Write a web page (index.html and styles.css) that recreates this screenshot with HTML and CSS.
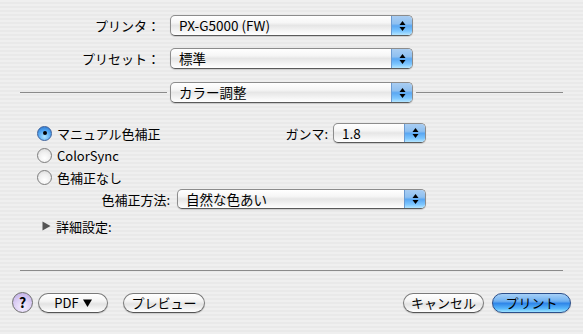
FILE: index.html
```html
<!DOCTYPE html>
<html lang="ja">
<head>
<meta charset="utf-8">
<link rel="stylesheet" href="styles.css">
</head>
<body>
<div class="dialog">
  <div class="field-row">
    <div class="flabel">プリンタ：</div>
    <div class="popup wide"><span class="val">PX-G5000 (FW)</span><span class="arr"><svg width="7" height="12" viewBox="0 0 7 12"><path d="M3.5 1 L6.5 5 L0.5 5 Z M0.5 7 L6.5 7 L3.5 11 Z" fill="#000"/></svg></span></div>
  </div>
  <div class="field-row second">
    <div class="flabel">プリセット：</div>
    <div class="popup wide"><span class="val">標準</span><span class="arr"><svg width="7" height="12" viewBox="0 0 7 12"><path d="M3.5 1 L6.5 5 L0.5 5 Z M0.5 7 L6.5 7 L3.5 11 Z" fill="#000"/></svg></span></div>
  </div>
  <div class="sep-row">
    <div class="line"></div>
    <div class="popup wide"><span class="val">カラー調整</span><span class="arr"><svg width="7" height="12" viewBox="0 0 7 12"><path d="M3.5 1 L6.5 5 L0.5 5 Z M0.5 7 L6.5 7 L3.5 11 Z" fill="#000"/></svg></span></div>
    <div class="line"></div>
  </div>

  <div class="opts">
    <div class="opt-row">
      <span class="radio on"><span class="dot"></span></span><span class="rtext">マニュアル色補正</span>
      <div class="gamma">
        <span class="glabel">ガンマ:</span>
        <div class="popup gpop"><span class="val">1.8</span><span class="arr"><svg width="7" height="12" viewBox="0 0 7 12"><path d="M3.5 1 L6.5 5 L0.5 5 Z M0.5 7 L6.5 7 L3.5 11 Z" fill="#000"/></svg></span></div>
      </div>
    </div>
    <div class="opt-row">
      <span class="radio"></span><span class="rtext">ColorSync</span>
    </div>
    <div class="opt-row">
      <span class="radio"></span><span class="rtext">色補正なし</span>
    </div>
    <div class="method-row">
      <span class="mlabel">色補正方法:</span>
      <div class="popup mpop"><span class="val">自然な色あい</span><span class="arr"><svg width="7" height="12" viewBox="0 0 7 12"><path d="M3.5 1 L6.5 5 L0.5 5 Z M0.5 7 L6.5 7 L3.5 11 Z" fill="#000"/></svg></span></div>
    </div>
    <div class="disclose-row">
      <svg class="tri" width="9" height="10" viewBox="0 0 9 10"><path d="M0.5 0.5 L8.5 5 L0.5 9.5 Z" fill="#555"/></svg>
      <span>詳細設定:</span>
    </div>
  </div>

  <div class="bottom-line"></div>

  <div class="buttons">
    <span class="help">?</span>
    <span class="btn pdf">PDF <svg width="9" height="8" viewBox="0 0 9 8"><path d="M0 0.5 L9 0.5 L4.5 8 Z" fill="#000"/></svg></span>
    <span class="btn preview">プレビュー</span>
    <span class="spacer"></span>
    <span class="btn cancel">キャンセル</span>
    <span class="btn print">プリント</span>
  </div>
</div>
</body>
</html>
```

FILE: styles.css
```css
html, body {
  margin: 0;
  padding: 0;
}
body {
  width: 583px;
  height: 334px;
  overflow: hidden;
  font-family: "Noto Sans CJK JP", sans-serif;
  font-size: 13px;
  color: #000;
  background: repeating-linear-gradient(#efefef 0 2px, #e9e9e9 2px 4px);
}
.dialog {
  padding-top: 15px;
}
.field-row {
  display: flex;
  align-items: center;
  height: 21px;
}
.field-row.second {
  margin-top: 12px;
}
.flabel {
  width: 170px;
  padding-right: 10px;
  box-sizing: border-box;
  text-align: right;
  white-space: nowrap;
}
.popup {
  display: flex;
  height: 21px;
  box-sizing: border-box;
  border: 1px solid #8c8c8c;
  border-bottom-color: #5a5a5a;
  border-radius: 5px;
  overflow: hidden;
  background: linear-gradient(#ffffff 0%, #f6f6f6 35%, #e6e6e6 50%, #f3f3f3 75%, #ffffff 100%);
  box-shadow: 0 1px 1px rgba(0, 0, 0, 0.15);
}
.popup.wide {
  width: 243px;
}
.popup .val {
  flex: 1;
  padding-left: 8px;
  line-height: 19px;
  white-space: nowrap;
  font-size: 13.5px;
}
.popup .arr {
  width: 20px;
  display: flex;
  align-items: center;
  justify-content: center;
  border-left: 1px solid #6b9ad0;
  background: linear-gradient(#a9cdf2 0%, #8fc0f0 40%, #5aa7f2 52%, #7cc6ff 80%, #b5e6ff 100%);
}
.sep-row {
  display: flex;
  align-items: center;
  padding: 0 20px;
  margin-top: 13px;
}
.sep-row .line {
  flex: 1;
  height: 1px;
  background: #8a8a8a;
}
.sep-row .popup {
  margin: 0 3px;
}
.opts {
  margin-top: 19px;
  padding-left: 37px;
  padding-right: 157px;
}
.opt-row {
  display: flex;
  align-items: center;
  height: 22px;
}
.radio {
  width: 15px;
  height: 15px;
  box-sizing: border-box;
  border-radius: 50%;
  border: 1px solid #7d7d7d;
  background: radial-gradient(circle at 50% 70%, #ffffff 0%, #f0f0f0 50%, #d6d6d6 100%);
  display: flex;
  align-items: center;
  justify-content: center;
  margin-right: 5px;
}
.radio.on {
  border-color: #3a5f9a;
  background: radial-gradient(circle at 50% 75%, #aee4ff 0%, #4fa3ef 55%, #2a6fc9 100%);
}
.radio .dot {
  width: 4px;
  height: 4px;
  border-radius: 50%;
  background: #000;
}
.gamma {
  margin-left: auto;
  display: flex;
  align-items: center;
}
.glabel {
  margin-right: 5px;
}
.gpop {
  width: 93px;
  height: 20px;
}
.gpop .val, .mpop .val {
  line-height: 18px;
}
.method-row {
  display: flex;
  align-items: center;
  height: 20px;
  margin-top: 1px;
}
.mlabel {
  width: 133px;
  text-align: right;
  margin-right: 7px;
}
.mpop {
  flex: 1;
  height: 20px;
}
.disclose-row {
  display: flex;
  align-items: center;
  height: 20px;
  margin-top: 7px;
  padding-left: 5px;
}
.disclose-row .tri {
  margin-right: 5px;
}
.bottom-line {
  height: 1px;
  background: #8a8a8a;
  margin: 34px 20px 0 20px;
}
.buttons {
  display: flex;
  align-items: center;
  margin-top: 21px;
  padding: 0 12px 0 12px;
  height: 21px;
}
.help {
  width: 21px;
  height: 21px;
  box-sizing: border-box;
  border-radius: 50%;
  border: 1px solid #6e6e6e;
  background: radial-gradient(circle at 50% 75%, #f4eeff 0%, #d9cbf3 55%, #b7a4e0 100%);
  font-weight: bold;
  font-size: 14px;
  line-height: 19px;
  text-align: center;
  margin-right: 5px;
}
.btn {
  display: flex;
  align-items: center;
  justify-content: center;
  height: 20px;
  box-sizing: border-box;
  border-radius: 10px;
  border: 1px solid #7a7a7a;
  border-bottom-color: #555;
  background: linear-gradient(#ffffff 0%, #f4f4f4 40%, #e3e3e3 55%, #f2f2f2 80%, #ffffff 100%);
  box-shadow: 0 1px 1px rgba(0, 0, 0, 0.15);
  white-space: nowrap;
}
.btn svg {
  margin-left: 4px;
}
.pdf {
  width: 70px;
}
.preview {
  width: 82px;
  margin-left: 15px;
}
.spacer {
  flex: 1;
}
.cancel {
  width: 81px;
}
.print {
  width: 79px;
  margin-left: 8px;
  border-color: #2c4f8a;
  background: linear-gradient(#a6d0f7 0%, #6fb0f0 40%, #2f86e8 52%, #56b6fb 80%, #9ee3ff 100%);
}
```
